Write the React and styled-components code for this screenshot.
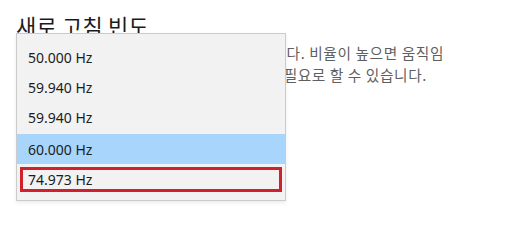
import styled, { createGlobalStyle } from "styled-components"

const GlobalStyle = createGlobalStyle`
  html, body {
    margin: 0;
    padding: 0;
    background: #ffffff;
  }
  body {
    width: 530px;
    height: 230px;
    overflow: hidden;
  }
`

const rates = [
  { label: '50.000 Hz' },
  { label: '59.940 Hz' },
  { label: '59.940 Hz' },
  { label: '60.000 Hz', selected: true },
  { label: '74.973 Hz', marked: true },
]

// lines run under the open list, only their right ends show
const lines = [
  { text: '디스플레이의 새로 고침 빈도를 선택합니다. 비율이 높으면 움직임', end: 444 },
  { text: '이 더 부드럽게 표시되지만 더 많은 전력을 필요로 할 수 있습니다.', end: 427 },
]

const App = () => {
  return (
    <StyledPage>
      <GlobalStyle />
      <Title>새로 고침 빈도</Title>
      <Description>
        {lines.map((line, i) => (
          <Line key={i} $end={line.end}>{line.text}</Line>
        ))}
      </Description>
      <Menu>
        {rates.map((rate, i) => (
          <Item key={i} $selected={rate.selected} $marked={rate.marked}>
            {rate.label}
          </Item>
        ))}
      </Menu>
    </StyledPage>
  )
}

const StyledPage = styled.div`
  position: relative;
  width: 530px;
  height: 230px;
  padding: 10px 0 0 16px;
  box-sizing: border-box;
  font-family: "Noto Sans CJK KR", "Noto Sans", sans-serif;
`

const Title = styled.h2`
  margin: 0;
  font-size: 22px;
  font-weight: 400;
  line-height: 30px;
  color: #1b1b1b;
  letter-spacing: 0.2px;
`

const Description = styled.div`
  display: flex;
  flex-direction: column;
  margin-top: 2px;
  font-size: 14.7px;
  letter-spacing: 0.6px;
  line-height: 22px;
  color: #5f5f5f;
`

const Line = styled.div`
  width: ${({ $end }) => $end - 16}px;
  text-align: right;
  white-space: nowrap;
`

const Menu = styled.div`
  position: absolute;
  left: 16px;
  top: 33px;
  width: 270px;
  height: 168px;
  box-sizing: border-box;
  display: flex;
  flex-direction: column;
  padding-top: 8px;
  background: #f2f2f2;
  border: 1px solid #cbcbcb;
  box-shadow: 0 2px 4px rgba(0, 0, 0, 0.08);
`

const Item = styled.div`
  position: relative;
  height: 30px;
  flex-shrink: 0;
  display: flex;
  align-items: center;
  padding-left: 11px;
  margin-top: ${({ $selected }) => $selected ? '2px' : '0'};
  font-family: "Noto Sans", "Open Sans", sans-serif;
  font-size: 14px;
  color: #1c1c1c;
  background: ${({ $selected }) => $selected ? '#a7d5fc' : 'transparent'};
  &::after {
    content: '';
    display: ${({ $marked }) => $marked ? 'block' : 'none'};
    position: absolute;
    left: 3px;
    right: 3px;
    top: 3px;
    bottom: 2px;
    border: 3px solid #d21f2d;
  }
`

export default App
